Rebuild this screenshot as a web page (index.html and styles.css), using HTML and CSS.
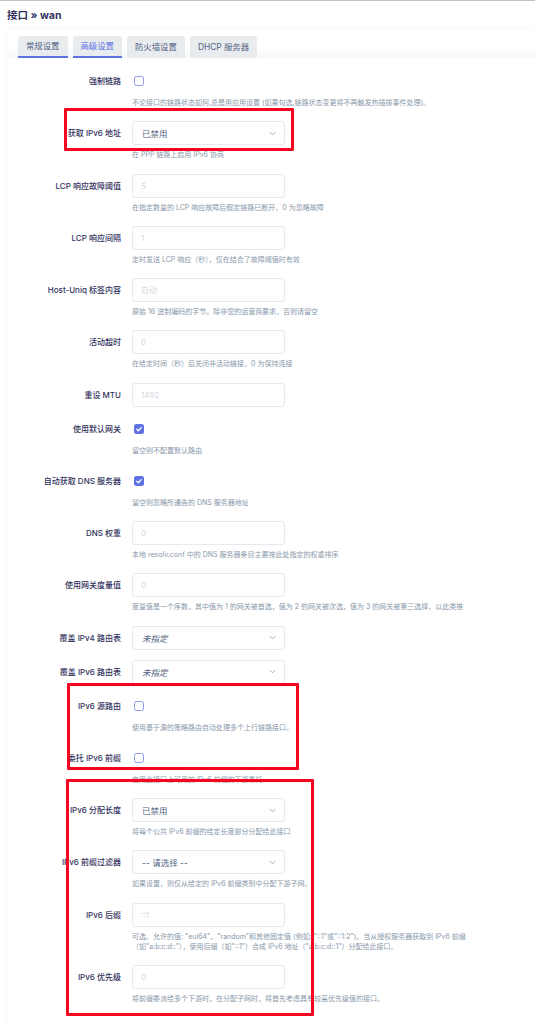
FILE: index.html
```html
<!DOCTYPE html>
<html lang="zh-CN">
<head>
<meta charset="utf-8">
<title>接口 » wan</title>
<link rel="stylesheet" href="styles.css">
</head>
<body>
<h2 class="title">接口 » wan</h2>
<div class="panel">
  <div class="tabs">
    <div class="tab under">常规设置</div>
    <div class="tab active">高级设置</div>
    <div class="tab">防火墙设置</div>
    <div class="tab">DHCP 服务器</div>
  </div>
  <div class="card">
    <div class="row">
      <div class="label">强制链路</div>
      <div class="field"><span class="cb"></span></div>
      <div class="help">不论接口的链路状态如何,总是用应用设置 (如果勾选,链路状态变更将不再触发热插拔事件处理)。</div>
    </div>
    <div class="row">
      <div class="label">获取 IPv6 地址</div>
      <div class="field"><div class="select"><span>已禁用</span><svg class="chev" viewBox="0 0 8 5" width="7" height="5"><path d="M0.8 0.8 L4 4 L7.2 0.8" fill="none" stroke="#8898aa" stroke-width="0.9"/></svg></div></div>
      <div class="help">在 PPP 链路上启用 IPv6 协商</div>
    </div>
    <div class="row">
      <div class="label">LCP 响应故障阈值</div>
      <div class="field"><input class="input" placeholder="5"></div>
      <div class="help">在指定数量的 LCP 响应故障后假定链路已断开，0 为忽略故障</div>
    </div>
    <div class="row">
      <div class="label">LCP 响应间隔</div>
      <div class="field"><input class="input" placeholder="1"></div>
      <div class="help">定时发送 LCP 响应（秒），仅在结合了故障阈值时有效</div>
    </div>
    <div class="row">
      <div class="label">Host-Uniq 标签内容</div>
      <div class="field"><input class="input" placeholder="自动"></div>
      <div class="help">原始 16 进制编码的字节。除非您的运营商要求，否则请留空</div>
    </div>
    <div class="row">
      <div class="label">活动超时</div>
      <div class="field"><input class="input" placeholder="0"></div>
      <div class="help">在给定时间（秒）后关闭非活动链接，0 为保持连接</div>
    </div>
    <div class="row">
      <div class="label">重设 MTU</div>
      <div class="field"><input class="input" placeholder="1492"></div>
    </div>
    <div class="row">
      <div class="label">使用默认网关</div>
      <div class="field"><span class="cb checked"><svg viewBox="0 0 10 10" width="10" height="10"><path d="M2.8 5.2 L4.4 6.7 L7.3 3.6" fill="none" stroke="#fff" stroke-width="1.3" stroke-linecap="round" stroke-linejoin="round"/></svg></span></div>
      <div class="help">留空则不配置默认路由</div>
    </div>
    <div class="row">
      <div class="label">自动获取 DNS 服务器</div>
      <div class="field"><span class="cb checked"><svg viewBox="0 0 10 10" width="10" height="10"><path d="M2.8 5.2 L4.4 6.7 L7.3 3.6" fill="none" stroke="#fff" stroke-width="1.3" stroke-linecap="round" stroke-linejoin="round"/></svg></span></div>
      <div class="help">留空则忽略所通告的 DNS 服务器地址</div>
    </div>
    <div class="row">
      <div class="label">DNS 权重</div>
      <div class="field"><input class="input" placeholder="0"></div>
      <div class="help">本地 resolv.conf 中的 DNS 服务器条目主要按此处指定的权重排序</div>
    </div>
    <div class="row">
      <div class="label">使用网关度量值</div>
      <div class="field"><input class="input" placeholder="0"></div>
      <div class="help">度量值是一个序数，其中值为 1 的网关被首选，值为 2 的网关被次选，值为 3 的网关被第三选择，以此类推</div>
    </div>
    <div class="row">
      <div class="label">覆盖 IPv4 路由表</div>
      <div class="field"><div class="select"><em>未指定</em><svg class="chev" viewBox="0 0 8 5" width="7" height="5"><path d="M0.8 0.8 L4 4 L7.2 0.8" fill="none" stroke="#8898aa" stroke-width="0.9"/></svg></div></div>
    </div>
    <div class="row">
      <div class="label">覆盖 IPv6 路由表</div>
      <div class="field"><div class="select"><em>未指定</em><svg class="chev" viewBox="0 0 8 5" width="7" height="5"><path d="M0.8 0.8 L4 4 L7.2 0.8" fill="none" stroke="#8898aa" stroke-width="0.9"/></svg></div></div>
    </div>
    <div class="row">
      <div class="label">IPv6 源路由</div>
      <div class="field"><span class="cb"></span></div>
      <div class="help">使用基于源的策略路由自动处理多个上行链路接口。</div>
    </div>
    <div class="row">
      <div class="label">委托 IPv6 前缀</div>
      <div class="field"><span class="cb"></span></div>
      <div class="help">启用此接口上可用的 IPv6 前缀的下游委托</div>
    </div>
    <div class="row">
      <div class="label">IPv6 分配长度</div>
      <div class="field"><div class="select"><span>已禁用</span><svg class="chev" viewBox="0 0 8 5" width="7" height="5"><path d="M0.8 0.8 L4 4 L7.2 0.8" fill="none" stroke="#8898aa" stroke-width="0.9"/></svg></div></div>
      <div class="help">将每个公共 IPv6 前缀的给定长度部分分配给此接口</div>
    </div>
    <div class="row">
      <div class="label">IPv6 前缀过滤器</div>
      <div class="field"><div class="select"><span>-- 请选择 --</span><svg class="chev" viewBox="0 0 8 5" width="7" height="5"><path d="M0.8 0.8 L4 4 L7.2 0.8" fill="none" stroke="#8898aa" stroke-width="0.9"/></svg></div></div>
      <div class="help">如果设置，则仅从给定的 IPv6 前缀类别中分配下游子网。</div>
    </div>
    <div class="row">
      <div class="label">IPv6 后缀</div>
      <div class="field"><input class="input" placeholder="::1"></div>
      <div class="help">可选。允许的值: "eui64"、"random"和其他固定值 (例如: "::1"或"::1:2")。当从授权服务器获取到 IPv6 前缀<br>（如"a:b:c:d::"），使用后缀（如"::1"）合成 IPv6 地址（"a:b:c:d::1"）分配给此接口。</div>
    </div>
    <div class="row">
      <div class="label">IPv6 优先级</div>
      <div class="field"><input class="input" placeholder="0"></div>
      <div class="help">将前缀委派给多个下游时，在分配子网时，将首先考虑具有较高优先级值的接口。</div>
    </div>
  </div>
</div>
<div class="mark mark1"></div>
<div class="mark mark2"></div>
<div class="mark mark3"></div>
</body>
</html>
```
FILE: styles.css
```css
html, body {
  margin: 0;
  padding: 0;
  background: #fff;
}
body {
  position: relative;
  border-top: 1px solid #c4c0cc;
  font-family: Inter, "Noto Sans CJK SC", sans-serif;
  color: #32325d;
  overflow: hidden;
}
.title {
  margin: 0;
  padding: 8px 7px 0;
  font-size: 10.5px;
  line-height: 14px;
  font-weight: 700;
  color: #32325d;
}
.panel {
  margin: 7px 0 0 7px;
  box-shadow: 0 0 5px rgba(0, 0, 0, 0.05);
  background: #fff;
}
.tabs {
  display: flex;
  gap: 5px;
  padding: 6px 0 0 11px;
  background: linear-gradient(to bottom, #fff 55%, #f6f8f9 100%);
}
.tab {
  height: 22px;
  box-sizing: border-box;
  padding: 0 8px;
  line-height: 22px;
  font-size: 8.4px;
  color: #525f7f;
  background: #e9ecef;
  border-radius: 3px 3px 0 0;
}
.tab.under, .tab.active {
  border-bottom: 2px solid #5e72e4;
  line-height: 21px;
}
.tab.active {
  color: #5e72e4;
}
.card {
  padding: 11px 0 12px;
  background: #fff;
}
.row {
  display: grid;
  grid-template-columns: 114px 153px;
  column-gap: 11px;
  margin-bottom: 10px;
}
.row:has(.help) {
  margin-bottom: 13.25px;
}
.label {
  grid-column: 1;
  text-align: right;
  line-height: 24px;
  font-size: 8px;
  font-weight: 500;
  color: #32325d;
  white-space: nowrap;
}
.field {
  grid-column: 2;
  height: 24px;
}
.help {
  grid-column: 2 / span 2;
  width: 360px;
  margin-top: 5px;
  font-size: 7px;
  line-height: 10px;
  color: #8898aa;
  white-space: nowrap;
}
.input {
  display: block;
  width: 153px;
  height: 24px;
  box-sizing: border-box;
  border: 1px solid #e6e9ed;
  border-radius: 3px;
  padding: 0 8px;
  font-family: inherit;
  font-size: 8px;
  color: #525f7f;
  outline: none;
  background: #fff;
}
.input::placeholder {
  color: #d3d7dd;
}
.select {
  display: flex;
  align-items: center;
  justify-content: space-between;
  width: 153px;
  height: 24px;
  box-sizing: border-box;
  border: 1px solid #e6e9ed;
  border-radius: 3px;
  padding: 0 8px 0 9px;
  font-size: 8.5px;
  color: #525f7f;
  background: #fff;
}
.select em {
  font-style: italic;
  color: #525f7f;
}
.chev {
  display: block;
}
.cb {
  display: block;
  width: 10px;
  height: 10px;
  margin: 7px 0 0 2px;
  box-sizing: border-box;
  border: 1px solid #8f99ea;
  border-radius: 2.5px;
  background: #fff;
}
.cb.checked {
  border: none;
  background: #5e72e4;
}
.cb svg {
  display: block;
}
.mark {
  position: absolute;
  border: 3px solid #f5051f;
  box-sizing: border-box;
  border-radius: 1px;
}
.mark1 {
  left: 64px;
  top: 107px;
  width: 230px;
  height: 43px;
}
.mark2 {
  left: 67px;
  top: 682px;
  width: 232px;
  height: 87px;
}
.mark3 {
  left: 66px;
  top: 778px;
  width: 248px;
  height: 237px;
}
```
